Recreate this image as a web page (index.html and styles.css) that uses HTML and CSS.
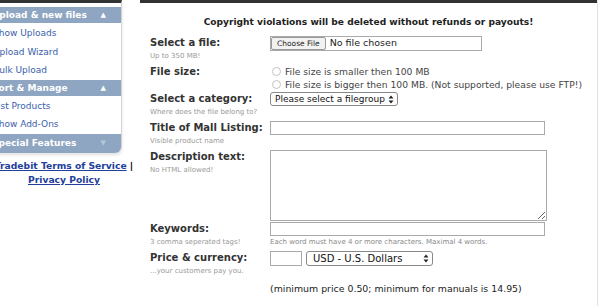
FILE: index.html
```html
<!DOCTYPE html>
<html lang="en">
<head>
  <meta charset="UTF-8" />
  <title>Tradebit - Upload</title>
  <link rel="stylesheet" href="styles.css">
</head>
<body>
  <div class="page">
    <aside class="sidebar">
      <div class="menu">
        <div class="menu-head">Upload &amp; new files <span class="menu-arrow">&#9650;</span></div>
        <div class="menu-group">
          <a href="#" class="menu-item">Show Uploads</a>
          <a href="#" class="menu-item">Upload Wizard</a>
          <a href="#" class="menu-item">Bulk Upload</a>
        </div>
        <div class="menu-head">Sort &amp; Manage <span class="menu-arrow">&#9650;</span></div>
        <div class="menu-group">
          <a href="#" class="menu-item">List Products</a>
          <a href="#" class="menu-item">Show Add-Ons</a>
        </div>
        <div class="menu-head menu-head-last">Special Features <span class="menu-arrow faded">&#9660;</span></div>
      </div>
      <div class="legal">
        <a href="#">Tradebit Terms of Service</a> |<br>
        <a href="#">Privacy Policy</a>
      </div>
    </aside>

    <main class="panel">
      <div class="panel-bar"></div>
      <p class="warning">Copyright violations will be deleted without refunds or payouts!</p>

      <form class="upload-form" autocomplete="off">
        <div class="row">
          <div class="label-col">
            <label class="label">Select a file:</label>
            <div class="note">Up to 350 MB!</div>
          </div>
          <div class="field-col">
            <input type="file" class="file-input">
          </div>
        </div>

        <div class="row row-tight">
          <div class="label-col">
            <label class="label">File size:</label>
          </div>
          <div class="field-col">
            <label class="radio-line"><input type="radio" name="size" class="radio"> File size is smaller then 100 MB</label>
            <label class="radio-line"><input type="radio" name="size" class="radio"> File size is bigger then 100 MB. (Not supported, please use FTP!)</label>
          </div>
        </div>

        <div class="row">
          <div class="label-col">
            <label class="label">Select a category:</label>
            <div class="note">Where does the file belong to?</div>
          </div>
          <div class="field-col">
            <span class="select-wrap">
              <select class="select select-category">
                <option>Please select a filegroup</option>
              </select>
              <svg class="select-arrows" width="6" height="9" viewBox="0 0 6 9"><path d="M3 0.5L5.5 3.5H0.5Z M3 8.5L5.5 5.5H0.5Z" fill="#222"/></svg>
            </span>
          </div>
        </div>

        <div class="row">
          <div class="label-col">
            <label class="label">Title of Mall Listing:</label>
            <div class="note">Visible product name</div>
          </div>
          <div class="field-col">
            <input type="text" class="text-input wide">
          </div>
        </div>

        <div class="row row-flush">
          <div class="label-col">
            <label class="label">Description text:</label>
            <div class="note">No HTML allowed!</div>
          </div>
          <div class="field-col">
            <textarea class="textarea"></textarea>
          </div>
        </div>

        <div class="row">
          <div class="label-col">
            <label class="label">Keywords:</label>
            <div class="note">3 comma seperated tags!</div>
          </div>
          <div class="field-col">
            <input type="text" class="text-input wide">
            <div class="hint">Each word must have 4 or more characters. Maximal 4 words.</div>
          </div>
        </div>

        <div class="row">
          <div class="label-col">
            <label class="label">Price &amp; currency:</label>
            <div class="note">...your customers pay you.</div>
          </div>
          <div class="field-col price-fields">
            <input type="text" class="text-input price">
            <span class="select-wrap">
              <select class="select select-currency">
                <option>USD - U.S. Dollars</option>
              </select>
              <svg class="select-arrows" width="6" height="9" viewBox="0 0 6 9"><path d="M3 0.5L5.5 3.5H0.5Z M3 8.5L5.5 5.5H0.5Z" fill="#222"/></svg>
            </span>
          </div>
        </div>

        <div class="row">
          <div class="label-col"></div>
          <div class="field-col">
            <p class="min-price">(minimum price 0.50; minimum for manuals is 14.95)</p>
          </div>
        </div>
      </form>
    </main>
  </div>
</body>
</html>
```

FILE: styles.css
```css
:root {
  --text: #333;
  --muted: #999;
  --menu-head: #8ea6c2;
  --menu-link: #3a5eab;
  --legal-link: #22409a;
  --bar: #333;
  --border: #aaa;
}
html, body {
  margin: 0;
  padding: 0;
  background: #fff;
  color: var(--text);
  font-family: 'DejaVu Sans', Verdana, sans-serif;
  overflow: hidden;
}
.page {
  display: flex;
  align-items: flex-start;
  width: 612px;
}

/* sidebar */
.sidebar {
  width: 152px;
  margin-left: -12px;
  flex-shrink: 0;
}
.menu {
  width: 133px;
  border-top: 3px solid var(--bar);
  border-right: 1px solid #d4d4d4;
  padding-top: 4px;
  border-radius: 0 0 6px 6px;
  box-shadow: 0 2px 3px rgba(0,0,0,0.12);
  display: flex;
  flex-direction: column;
}
.menu-head {
  display: flex;
  justify-content: space-between;
  align-items: center;
  height: 16px;
  padding: 0 15px 0 4px;
  background: var(--menu-head);
  color: #fff;
  font-size: 9px;
  font-weight: 700;
}
.menu-head-last {
  height: 19px;
  border-radius: 0 0 6px 6px;
}
.menu-arrow {
  font-size: 7px;
}
.menu-arrow.faded {
  color: #b4c5d9;
}
.menu-group {
  padding: 1px 0 0 0;
}
.menu-item {
  display: block;
  padding-left: 5px;
  line-height: 18.5px;
  font-size: 9px;
  color: var(--menu-link);
  text-decoration: none;
}
.legal {
  margin-top: 6px;
  text-align: center;
  font-size: 9.2px;
  font-weight: 700;
  line-height: 14px;
  color: #000;
}
.legal a {
  color: var(--legal-link);
}

/* main panel */
.panel {
  width: 457px;
  border-right: 1px solid #e2e2e2;
  min-height: 306px;
}
.panel-bar {
  height: 3px;
  background: var(--bar);
}
.warning {
  margin: 12px 0 7px 0;
  text-align: center;
  font-size: 9.1px;
  font-weight: 700;
  line-height: 14px;
  color: #222;
}
.upload-form {
  display: flex;
  flex-direction: column;
  padding-left: 10px;
}
.row {
  display: grid;
  grid-template-columns: 120px 1fr;
  padding-bottom: 3px;
}
.row-tight,
.row-flush {
  padding-bottom: 1px;
}
.label {
  display: block;
  font-size: 10px;
  font-weight: 700;
  line-height: 14px;
  color: #333;
}
.note {
  font-size: 7px;
  line-height: 12px;
  color: var(--muted);
}
.field-col {
  font-size: 9.2px;
  color: #444;
}
.file-input {
  box-sizing: border-box;
  width: 212px;
  height: 15px;
  border: 1px solid var(--border);
  font-family: inherit;
  font-size: 9.5px;
  color: #222;
  padding: 0;
}
.file-input::file-selector-button {
  height: 13px;
  margin: 0 4px 0 0;
  padding: 0 5px;
  border: 1px solid #999;
  border-radius: 2px;
  background: #f2f2f2;
  font-family: inherit;
  font-size: 7.5px;
  color: #222;
}
.radio-line {
  display: flex;
  align-items: center;
  height: 13px;
  gap: 4px;
}
.radio {
  appearance: none;
  box-sizing: border-box;
  width: 9px;
  height: 9px;
  margin: 0 0 0 2px;
  border: 1px solid #c4c4c4;
  border-radius: 50%;
  background: #fff;
}
.select-wrap {
  position: relative;
  display: inline-block;
}
.select {
  appearance: none;
  box-sizing: border-box;
  height: 14px;
  border: 1px solid #888;
  border-radius: 3px;
  background: #fff;
  font-family: inherit;
  font-size: 9px;
  color: #111;
  padding: 0 0 0 4px;
  display: block;
}
.select-category {
  width: 128px;
}
.select-currency {
  width: 127px;
  padding-left: 6px;
}
.select-arrows {
  position: absolute;
  right: 4px;
  top: 3px;
}
.text-input {
  box-sizing: border-box;
  display: block;
  height: 14px;
  border: 1px solid var(--border);
  padding: 0 2px;
  font-family: inherit;
  font-size: 9px;
}
.text-input.wide {
  width: 275px;
}
.textarea {
  box-sizing: border-box;
  display: block;
  width: 277px;
  height: 71px;
  margin: 0;
  border: 1px solid var(--border);
  font-family: inherit;
  font-size: 9px;
}
.hint {
  font-size: 7px;
  line-height: 12px;
  color: #888;
}
.price-fields {
  display: flex;
  gap: 4px;
  align-items: flex-start;
}
.text-input.price {
  width: 32px;
  height: 15px;
}
.price-fields .select {
  height: 15px;
  font-size: 10px;
}
.min-price {
  margin: 2px 0 0 0;
  font-size: 9.4px;
  line-height: 14px;
  color: #222;
}
```
